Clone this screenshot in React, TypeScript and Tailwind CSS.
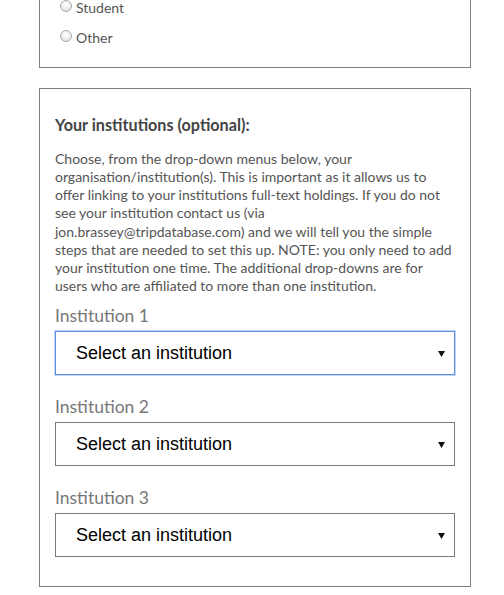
import React from "react";

function Radio({ label }: { label: string }) {
  return (
    <div className="flex h-[30px] items-center">
      <span className="mr-[4px] mt-[-3px] inline-block h-[12px] w-[12px] rounded-full border border-[#a9a9a9] bg-[radial-gradient(circle_at_50%_35%,#ffffff_0%,#eeeeee_55%,#d4d4d4_100%)]" />
      <span className="text-[14px] text-[#555555]">{label}</span>
    </div>
  );
}

function SelectBox({ focused }: { focused?: boolean }) {
  return (
    <div
      className={
        "flex h-[44px] items-center justify-between bg-white pl-[20px] pr-[9px] " +
        (focused
          ? "border border-[#5d8fdc] shadow-[0_0_0_1px_#c2d5f3]"
          : "border border-[#7a7a7a]")
      }
    >
      <span className="font-['Liberation_Sans',Arial,sans-serif] text-[18px] text-black">
        Select an institution
      </span>
      <svg width="7" height="6" viewBox="0 0 7 6" className="mt-[1px]">
        <polygon points="0,0 7,0 3.5,6" fill="#111" />
      </svg>
    </div>
  );
}

export default function App() {
  return (
    <div className="min-h-[595px] bg-white font-['Lato','Open_Sans',sans-serif] text-[#555555]">
      <div className="ml-[39px] w-[432px] mt-[-8px] border-x border-b border-[#808080] pl-[20px] pb-[15px]">
        <Radio label="Student" />
        <Radio label="Other" />
      </div>

      <div className="ml-[39px] mt-[20px] w-[432px] border border-[#808080] px-[15px] pt-[26px] pb-[29px]">
        <h3 className="text-[16.2px] font-bold leading-[20px] text-[#444444]">
          Your institutions (optional):
        </h3>
        <p className="mt-[15px] whitespace-nowrap text-[14px] leading-[18.15px] text-[#555555]">
          Choose, from the drop-down menus below, your
          <br />
          organisation/institution(s). This is important as it allows us to
          <br />
          offer linking to your institutions full-text holdings. If you do not
          <br />
          see your institution contact us (via
          <br />
          jon.brassey@tripdatabase.com) and we will tell you the simple
          <br />
          steps that are needed to set this up. NOTE: you only need to add
          <br />
          your institution one time. The additional drop-downs are for
          <br />
          users who are affiliated to more than one institution.
        </p>

        <div className="mt-[9px]">
          <div className="text-[17.5px] leading-[24px] text-[#777777]">Institution 1</div>
          <div className="mt-[3px]">
            <SelectBox focused />
          </div>
        </div>
        <div className="mt-[20px]">
          <div className="text-[17.5px] leading-[24px] text-[#777777]">Institution 2</div>
          <div className="mt-[3px]">
            <SelectBox />
          </div>
        </div>
        <div className="mt-[20px]">
          <div className="text-[17.5px] leading-[24px] text-[#777777]">Institution 3</div>
          <div className="mt-[3px]">
            <SelectBox />
          </div>
        </div>
      </div>
    </div>
  );
}
